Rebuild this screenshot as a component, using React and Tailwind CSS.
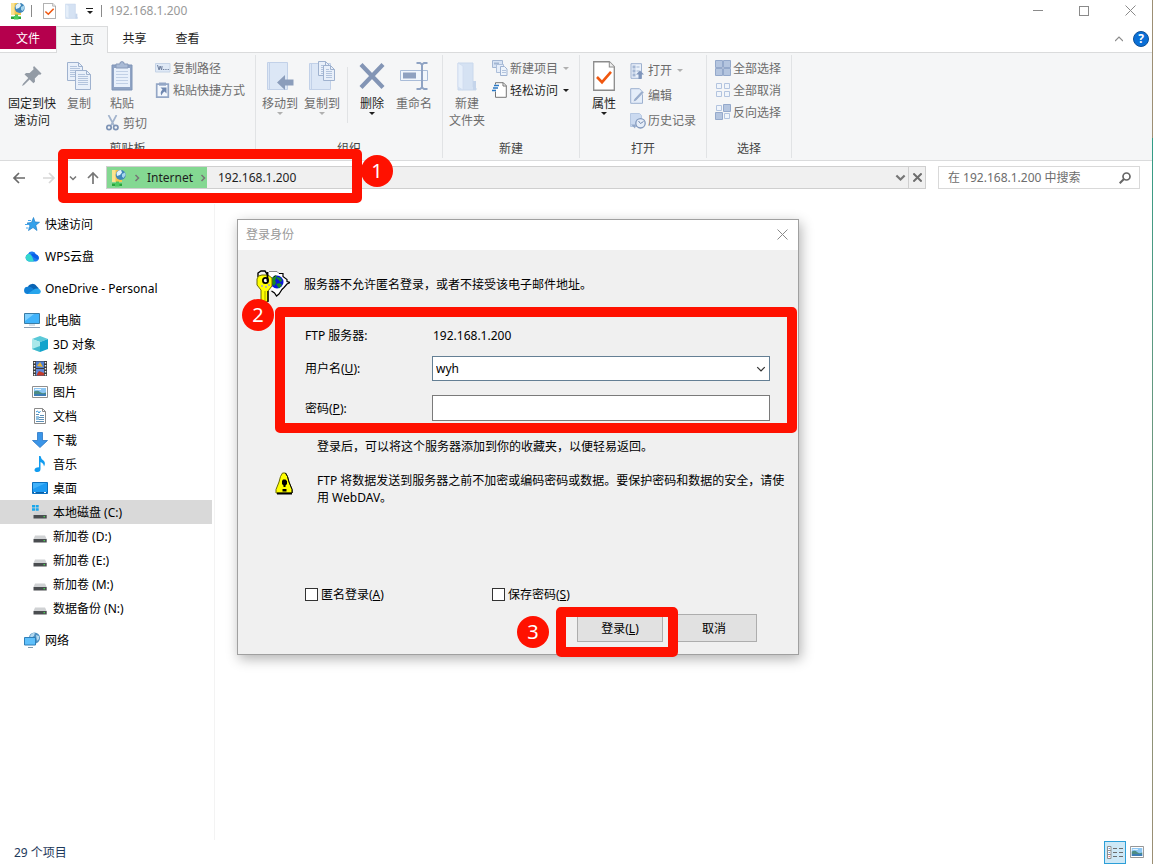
import React from "react";
import { useState } from "react";

/* ---------- small glyphs ---------- */

const Caret = ({ className = "text-[#1e1e1e]" }) => (
  <svg width="6" height="3" viewBox="0 0 6 3" className={className}>
    <path d="M0 0h6L3 3z" fill="currentColor" />
  </svg>
);

const Chevron = ({ dir = "down", size = 8, stroke = 1.5, className = "text-[#767676]" }) => {
  const d = {
    down: "M1 2.5l3 3 3-3",
    up: "M0 6l4-4 4 4",
    right: "M2.5 1l3 3-3 3",
  }[dir];
  return (
    <svg width={size} height={size} viewBox="0 0 8 8" className={className}>
      <path d={d} fill="none" stroke="currentColor" strokeWidth={stroke} />
    </svg>
  );
};

const Cross = ({ size = 11, stroke = 1, className = "text-[#8a8a8a]" }) => (
  <svg width={size} height={size} viewBox="0 0 11 11" className={className}>
    <path d="M.5.5l10 10M10.5.5l-10 10" stroke="currentColor" strokeWidth={stroke} />
  </svg>
);

const Arrow = ({ dir = "left", className = "text-[#6a6a6a]" }) => {
  const d = {
    left: "M13 7H2M7 2L2 7l5 5",
    right: "M1 7h11M7 2l5 5-5 5",
    up: "M7 13V2M2 7l5-5 5 5",
  }[dir];
  return (
    <svg width="14" height="14" viewBox="0 0 14 14" className={className}>
      <path d={d} fill="none" stroke="currentColor" strokeWidth="1.7" />
    </svg>
  );
};

/* ---------- icons ---------- */

const FtpIcon = () => (
  <svg width="16" height="18" viewBox="0 0 16 18" className="shrink-0">
    <path d="M1 1h10v12H1z" fill="#f3c74f" />
    <path d="M1 1h3.500v12H1z" fill="#fbe391" />
    <path d="M5 12.500h3v2.500H5z" fill="#4fc060" />
    <path d="M1 14.500h10v2.500H1z" fill="#27a63a" />
    <path d="M4 14h4.500v3.500H4z" fill="#4ccb5e" />
    <circle cx="9.700" cy="6" r="5" fill="#3f86ba" />
    <path d="M5.500 4Q7 1 10 1l1 2.500L9 6 6 7z" fill="#e2f2fa" />
    <path d="M11 5l3-1.500.6 2.600-2 3-1.600-1.300z" fill="#a6d4ec" />
  </svg>
);

const CheckDoc = ({ big }) => (
  <svg width={big ? 22 : 13} height={big ? 30 : 16} viewBox="0 0 22 29" preserveAspectRatio="none">
    <path d="M.7.7h15.600l5 5v22.600H.7z" fill="#fff" stroke="#8b8b8b" strokeWidth="1.300" />
    <path d="M16.300.7v5h5" fill="#eee" stroke="#8b8b8b" strokeWidth="1" />
    <path d="M4 15.500l5 5 9-10" fill="none" stroke="#f0570f" strokeWidth="2.600" />
  </svg>
);

const PaleFolder = ({ big }) => (
  <svg width={big ? 20 : 13} height={big ? 30 : 16} viewBox="0 0 20 30" preserveAspectRatio="none">
    <path d="M1 2h15v24l3 1v2H1z" fill="#d5e2f3" stroke="#c9d8ec" />
    <path d="M1 2l5 3v24l-5-3z" fill="#e6effa" stroke="#cfdcef" strokeWidth=".8" />
    <path d="M16 20h3v9h-3z" fill="#c5d5eb" />
  </svg>
);

const PinIcon = () => (
  <svg width="22" height="22" viewBox="0 0 22 22">
    <path d="M13 1l7.500 7.500-1.200 1.300-1.500-.3-4 4 .2 3.300-1.600 1.500L8.600 14.500 3 20l-2 1 1-2.200L7.300 13 3.500 9.400 5 7.900l3.600.2 4-3.900-.5-1.800z" fill="#939ba5" />
  </svg>
);

const Page = ({ x, y, w = 15, h = 19 }) => (
  <g transform={`translate(${x} ${y})`}>
    <path d={`M.5.5h${w - 5}l4 4v${h - 5}H.5z`} fill="#e9f0fa" stroke="#9fb2cf" />
    <path d={`M${w - 4.5}.5v4h4`} fill="none" stroke="#9fb2cf" />
    <path
      d={`M3 4.500h${w - 9}M3 6.500h${w - 6}M3 8.500h${w - 6}M3 10.500h${w - 6}M3 12.500h${w - 6}${h > 16 ? `M3 14.500h${w - 6}` : ""}`}
      stroke="#b3c4dd"
    />
  </g>
);

const CopyIcon = () => (
  <svg width="26" height="30" viewBox="0 0 26 30">
    <Page x={1} y={1} w={16} />
    <Page x={9} y={9} w={16} h={20} />
  </svg>
);

const PasteIcon = () => (
  <svg width="22" height="30" viewBox="0 0 22 30">
    <path d="M1 4h20v25H1z" fill="#8fa3c4" stroke="#7f94b7" />
    <path d="M3 7h16v19H3z" fill="#e8f0fb" />
    <path d="M5 3h4V1.500Q11-.3 13 1.500V3h4v4H5z" fill="#a9bad5" stroke="#8799b8" />
    <path d="M5 10.500h12M5 13.500h12M5 16.500h12M5 19.500h12M5 22.500h12" stroke="#c1d0e6" />
  </svg>
);

const CopyPathIcon = () => (
  <svg width="16" height="16" viewBox="0 0 16 16">
    <path d="M.5 3.500h14.500v8.500H.5z" fill="#dfe9f6" stroke="#c5d3e6" />
    <path d="M2.500 5l1.600 5 1-4 1.500 4 .5-4" fill="none" stroke="#6e7f9e" />
    <path d="M8 9.500h1.300M10.300 9.500h1.300M12.600 9.500h1.300" stroke="#6e7f9e" />
  </svg>
);

const ShortcutIcon = () => (
  <svg width="16" height="16" viewBox="0 0 16 16">
    <path d="M1.700 2.200h11.600v12.900H1.700z" fill="#f4f8fd" stroke="#94a7c6" strokeWidth="1.700" />
    <path d="M4 .5h7v3.200H4z" fill="#94a7c6" />
    <path d="M5.500 5.500h6v6l-2-2Q7.500 10.500 6.500 13.500 4.500 10.500 7.500 7.500z" fill="#7088b0" />
  </svg>
);

const ScissorsIcon = () => (
  <svg width="13" height="16" viewBox="0 0 13 16" fill="none">
    <path d="M2.500 0l5.500 10.500M10.500 0L5 10.500" stroke="#a3b4cd" strokeWidth="1.700" />
    <circle cx="3" cy="12.500" r="2.200" stroke="#7d93b5" strokeWidth="1.700" />
    <circle cx="9.800" cy="12.500" r="2.200" stroke="#7d93b5" strokeWidth="1.700" />
  </svg>
);

const MoveToIcon = () => (
  <svg width="28" height="30" viewBox="0 0 28 30">
    <path d="M1.500 1.500h20v27h-20z" fill="#dce7f6" stroke="#c2d1e8" />
    <path d="M3.500 1.500v27" stroke="#c2d1e8" />
    <path d="M11 21.500l8-7.500v4.500h8.500v6H19V29z" fill="#8b9dbb" />
  </svg>
);

const CopyToIcon = () => (
  <svg width="28" height="30" viewBox="0 0 28 30">
    <path d="M1.500 2.500h21v26h-21z" fill="#dce7f6" stroke="#c2d1e8" />
    <path d="M3.500 2.500v26" stroke="#c2d1e8" />
    <Page x={10} y={0} w={12} h={15} />
    <Page x={15} y={4} w={12} h={16} />
  </svg>
);

const DeleteIcon = () => (
  <svg width="26" height="30" viewBox="0 0 26 30">
    <path d="M2 3.500l22 23M24 3.500L2 26.500" stroke="#8395b5" strokeWidth="4.200" />
  </svg>
);

const RenameIcon = () => (
  <svg width="30" height="30" viewBox="0 0 30 30">
    <path d="M1.500 9.500h27v10h-27z" fill="#f1f6fc" stroke="#a9bcd8" />
    <path d="M4 11.500h13v6H4z" fill="#8fa1c0" />
    <path d="M17.500 2h3.500l2 1.500L25 2h3.500M17.500 28H21l2-1.500L25 28h3.500M23 3v24" fill="none" stroke="#8fa3c3" strokeWidth="2" />
  </svg>
);

const NewItemIcon = () => (
  <svg width="16" height="16" viewBox="0 0 16 16">
    <path d="M.5.5h10v7H.5z" fill="#d7e3f4" stroke="#a3b6d3" />
    <path d="M2 3.500h5" stroke="#a3b6d3" strokeWidth="2" />
    <path d="M4.500 4.500h7v8h-7z" fill="#e6eefa" stroke="#adbfda" />
    <path d="M8.500 6.500h4l2.500 2.500v6.500H8.500z" fill="#edf3fb" stroke="#9fb3d2" />
    <path d="M10 10.500h4M10 12.500h4" stroke="#b3c4dd" />
  </svg>
);

const EasyAccessIcon = () => (
  <svg width="16" height="16" viewBox="0 0 16 16">
    <path d="M3.500 2.500V.7h7.800l3 3v11.600H3.500V9.500" fill="#fff" stroke="#757575" />
    <path d="M11 .7v3.300h3.300" fill="none" stroke="#757575" />
    <path d="M2 3.500h5M1 6h5M0 8.500h4" stroke="#2b78c4" strokeWidth="1.300" />
  </svg>
);

const OpenIcon = () => (
  <svg width="14" height="16" viewBox="0 0 14 16">
    <path d="M1 .7h10.500v14.600H1z" fill="#eaf1fa" stroke="#9db1cf" />
    <path d="M2.500 2.500h3v3h-3zM2.500 6.500h3v3h-3zM2.500 10.500h3v3h-3z" fill="#a3b6d3" />
    <path d="M6.500 4h3M6.500 8h3" stroke="#a3b6d3" />
    <path d="M10 7.500l4 4h-2.500V16h-3v-4.500H6z" fill="#7f95bb" />
  </svg>
);

const EditIcon = () => (
  <svg width="14" height="16" viewBox="0 0 14 16">
    <path d="M.7.7h8.800l3 3v11.600H.7z" fill="#e4edf9" stroke="#9db1cf" />
    <path d="M3 14l1-3 8-8.500 2 2L6 13z" fill="#9aaecd" stroke="#fff" strokeWidth=".5" />
  </svg>
);

const HistoryIcon = () => (
  <svg width="16" height="16" viewBox="0 0 16 16">
    <path d="M.5.5h9l2 2v11H.5z" fill="#cbdaf0" stroke="#b6c8e2" />
    <circle cx="10.500" cy="10.300" r="4.700" fill="#e7eef8" stroke="#8299bd" strokeWidth="1.300" />
    <path d="M8.500 8l2 2.500L13.500 8.500" fill="none" stroke="#7288ad" />
    <path d="M1 11.500h5l-1 4z" fill="#93a8c9" />
  </svg>
);

// four tiles, each one filled or empty
const TilesIcon = ({ filled }) => (
  <svg width="16" height="16" viewBox="0 0 16 16">
    {[[0, 0], [8, 0], [0, 8], [8, 8]].map(([x, y], i) =>
      filled[i] ? (
        <path key={i} d={`M${x + 0.5} ${y + 0.5}h7v7h-7z`} fill="#b4c5df" stroke="#94a9cb" />
      ) : (
        <path key={i} d={`M${x + 1.5} ${y + 1.5}h5v5h-5z`} fill="#f0f5fb" stroke="#b3c4df" />
      )
    )}
  </svg>
);

const StarIcon = () => (
  <svg width="16" height="16" viewBox="0 0 16 16">
    <path d="M9.500 1.500L11 6l4.500.3-3.700 2.900 1.200 5.300L9 11.500l-4.500 3L6 9.700 3 7l4.500-.5z" fill="#35a1ea" stroke="#1f7fc9" strokeWidth=".7" />
    <path d="M4 4.500h3M1 8.500h4M2 12h2.500" stroke="#4aa6ea" />
  </svg>
);

const WpsCloudIcon = () => (
  <svg width="16" height="16" viewBox="0 0 16 16">
    <path d="M5 13.500a4 4 0 0 1-1-7.600A4.300 4.300 0 0 1 12 6.500a3.600 3.600 0 0 1 0 7z" fill="#1d7df2" />
    <path d="M5 13.500a4 4 0 0 1-1-7.600Q6.500 5.500 8 8.500l2 5z" fill="#35d7cd" />
    <path d="M7 6.500q3-2 5 0a3.600 3.600 0 0 1 2.500 5Q10 10.500 7 6.500z" fill="#0b5fe8" />
  </svg>
);

const OneDriveIcon = () => (
  <svg width="17" height="16" viewBox="0 0 17 16">
    <path d="M4 6.500a5 5 0 0 1 8.500-.5L15 8.500l-8 3z" fill="#0a64b4" />
    <path d="M3.500 14A3.500 3.500 0 0 1 4 6.700q3-.4 5 1.800l4 5.500z" fill="#1180d6" />
    <path d="M3.500 14L11 8.800q5-1.300 5.700 2.500a2.600 2.600 0 0 1-2.500 2.700z" fill="#27a5ec" />
  </svg>
);

const PcIcon = () => (
  <svg width="16" height="16" viewBox="0 0 16 16">
    <path d="M.5 1.500h15v10H.5z" fill="#40b3fb" stroke="#3a7ca5" />
    <path d="M1 2h9L1 9z" fill="#7fd0ff" />
    <path d="M5 13h6" stroke="#a9c0d4" />
    <path d="M0 15.500h16" stroke="#8d9fb3" />
  </svg>
);

const CubeIcon = () => (
  <svg width="16" height="16" viewBox="0 0 16 16">
    <path d="M8 0l8 3-8 3-8-3z" fill="#5ac9d8" />
    <path d="M0 3l8 3v10l-8-3z" fill="#a9e8ea" />
    <path d="M8 6l8-3v10l-8 3z" fill="#12a4cc" />
    <path d="M0 13l8-3v6z" fill="#3fb9cd" />
  </svg>
);

const VideoIcon = () => (
  <svg width="16" height="16" viewBox="0 0 16 16">
    <path d="M1 1h14v15H1z" fill="#3b3b3b" />
    <path d="M4 1.500h8v6.500H4z" fill="#4e7fd4" />
    <path d="M4 9h8v6.500H4z" fill="#6189d8" />
    <path d="M5 6l3-4 3 5z" fill="#e3b234" />
    <path d="M5 14l2-3 5 2v2.500H5z" fill="#c23b2b" />
    <path d="M2.500 2v14M13.500 2v14" stroke="#f3f3f3" strokeWidth="1.400" strokeDasharray="1.500 1.500" />
  </svg>
);

const PictureIcon = ({ w = 16 }) => (
  <svg width={w} height="12" viewBox="0 0 16 12" preserveAspectRatio="none">
    <path d="M.5.5h15v11H.5z" fill="#fff" stroke="#8f8f8f" />
    <path d="M2 2h12v8H2z" fill="#8cc6f3" />
    <path d="M2 5.500q4-1.500 6 .5t6 .5V8H2z" fill="#4c8c84" />
    <path d="M2 8h12v2H2z" fill="#3d7db5" />
    <path d="M3 3.500h6" stroke="#e6f4fd" />
  </svg>
);

const DocIcon = () => (
  <svg width="16" height="16" viewBox="0 0 16 16">
    <path d="M2.500.5h8l3 3v12h-11z" fill="#fff" stroke="#8a8a8a" />
    <path d="M10.500.5v3h3" fill="none" stroke="#8a8a8a" />
    <path d="M4 4l1.500-1 1.500 2L8.500 3" fill="none" stroke="#3b9add" />
    <path d="M4 6.500h3M8 7.500h4M4 9.500h8M4 11.500h8M4 13.500h8" stroke="#5d8fb5" />
    <path d="M4 8h3v4H4z" fill="#8fbfe0" />
  </svg>
);

const DownloadIcon = () => (
  <svg width="16" height="16" viewBox="0 0 16 16">
    <path d="M5.500.5h5v8h5L8 15.500.5 8.500h5z" fill="#3a95e8" stroke="#2a76c4" strokeWidth=".8" />
  </svg>
);

const MusicIcon = () => (
  <svg width="16" height="16" viewBox="0 0 16 16">
    <path d="M7 0h1.500q.5 3 3 4.500 2.500 2 .5 6-.3-3.500-3.500-4.500v7q0 3-3 3Q2.500 16 2.500 14q0-2.500 4.500-2.800z" fill="#119cf0" />
  </svg>
);

const DesktopIcon = () => (
  <svg width="16" height="12" viewBox="0 0 16 12">
    <path d="M.5.5h15v11H.5z" fill="#1e9bf2" stroke="#0b6fbd" />
    <path d="M1 1h13L1 7z" fill="#41b2fa" />
    <path d="M1 10.500h14" stroke="#0b5fa5" />
    <path d="M2 10.500h1.500M12 10.500h2" stroke="#fff" />
  </svg>
);

const DriveIcon = ({ system }) => (
  <svg width="16" height="16" viewBox="0 0 16 16">
    {system ? <path d="M0 1h3v2.500H0zM3.700 1h3v2.500h-3zM0 4.300h3v2.500H0zM3.700 4.300h3v2.500h-3z" fill="#1aa7ec" /> : null}
    <path d="M3 7.500h10l1.700 3.500H1.500z" fill="#d0d2d4" />
    <path d="M1.500 11h13.200v3.500H1.500z" fill="#4a4d50" />
    <path d="M11.500 12h1.500v1.300h-1.500z" fill="#47d04f" />
  </svg>
);

const NetworkIcon = () => (
  <svg width="17" height="16" viewBox="0 0 17 16">
    <circle cx="10.500" cy="6" r="5.500" fill="#4d8fc0" />
    <path d="M6 4q2-3.500 5-3.500L10 4 7 6zM12 3l3 1v3l-2 2z" fill="#b5d9ee" />
    <path d="M.5 5.500h11v7.500H.5z" fill="#5fc0fb" stroke="#2f7fb8" />
    <path d="M4 15.500h5" stroke="#7d99ad" />
  </svg>
);

const KeyIcon = () => (
  <svg width="34" height="33" viewBox="0 0 34 33">
    <path d="M13 1.500h8l2 2h4l6.500 8.500L22.500 26 14 18z" fill="#fff" />
    <path d="M13 1.500h8l2 2" fill="none" stroke="#888" />
    <path d="M23 3.500h4v3l4 3v2l3 1-3 1.500-3 3.500-2 2-3 4.500-2.500 2-2-3-3-2" fill="none" stroke="#000" strokeWidth="1.200" />
    <circle cx="21" cy="12" r="6.500" fill="#0a17d8" />
    <path d="M15 12q0-6 6-6.500L20 9l-1 1 1 3-2 3zM21 7l4 1 1 3-2 1-1-2-2-1zM20 14l4-1 2 2-3 3.500z" fill="#16892a" />
    <path d="M17.500 7l2-1.500" stroke="#000" />
    <path d="M2 7V3l3-2h4l2 3v4" fill="none" stroke="#000" strokeWidth="1.400" />
    <path d="M2.500 6L1 9v6l4 5v11l3 2 4-2V21l4-5V8l-4-3H6z" fill="#ff0" stroke="#6b6b00" />
    <path d="M12 21v11" stroke="#000" strokeWidth="1.400" />
    <path d="M9 21v11" stroke="#a8a800" />
    <circle cx="9.500" cy="10.500" r="2.600" fill="#fff" stroke="#000" strokeWidth="1.800" />
    <path d="M11.500 2v9" stroke="#000" strokeWidth="1.800" />
    <path d="M5 15h2v2H5zM9 16h2v2H9zM12 14h2v2h-2z" fill="#b5b5a0" />
  </svg>
);

const WarningIcon = () => (
  <svg width="18" height="23" viewBox="0 0 18 23">
    <path d="M7.500 1h3l2 3.500L14 10l3 7.500V21H1v-3.500L4 10l1.500-5.500z" fill="#ff0" stroke="#6b6b00" />
    <path d="M10.500 1l2 3.500L14 10l3.200 7.500V21" fill="none" stroke="#000" />
    <path d="M2 21.500h15" stroke="#000" strokeWidth="2" />
    <path d="M7 9l1-1.500h2.500L12 9v3l-1.500 1.500v1.500H8.500v-1.500L7 12z" fill="#000" />
    <path d="M7.500 17h4v2.500h-4z" fill="#000" />
  </svg>
);

/* ---------- ribbon ---------- */

const Group = ({ label, className = "", children }) => (
  <section className="flex min-h-[103px] flex-col justify-between border-r border-[#e1e3e5] pb-px">
    <div className={`flex items-start ${className}`}>{children}</div>
    <div className="text-center text-[#444]">{label}</div>
  </section>
);

const BigButton = ({ icon, lines, enabled, caret, className = "w-[42px]" }) => (
  <button type="button" className={`flex flex-col items-center pt-[5px] ${enabled ? "text-[#1e1e1e]" : "text-[#6d6d6d]"} ${className}`}>
    <span className="mb-[3px] flex h-8 items-center justify-center">{icon}</span>
    {lines.map((line) => (
      <span key={line} className="whitespace-nowrap">{line}</span>
    ))}
    {caret ? <Caret className={enabled ? "text-[#1e1e1e]" : "text-[#b0b0b0]"} /> : null}
  </button>
);

const SmallButton = ({ icon, label, enabled, caret, tall }) => (
  <button type="button" className={`flex items-center ${tall ? "h-[25px]" : "h-[22px]"} ${enabled ? "text-[#1e1e1e]" : "text-[#6d6d6d]"}`}>
    <span className="flex w-[18px] shrink-0">{icon}</span>
    <span className="whitespace-nowrap">{label}</span>
    {caret ? (
      <span className="ml-[5px]">
        <Caret className={enabled ? "text-[#1e1e1e]" : "text-[#b0b0b0]"} />
      </span>
    ) : null}
  </button>
);

const Ribbon = () => (
  <div className="flex border-y border-[#dadbdc] bg-[#f5f6f7] py-0.5">
    <Group label="剪贴板" className="pl-2 pr-2.5">
      <BigButton icon={<PinIcon />} lines={["固定到快", "速访问"]} enabled className="w-12" />
      <BigButton icon={<CopyIcon />} lines={["复制"]} className="w-[46px]" />
      <div className="mr-2">
        <BigButton icon={<PasteIcon />} lines={["粘贴"]} className="w-10" />
        <button type="button" className="flex h-[22px] items-center gap-1 pl-1 text-[#6d6d6d]">
          <ScissorsIcon />
          剪切
        </button>
      </div>
      <div className="pt-0.5">
        <SmallButton icon={<CopyPathIcon />} label="复制路径" />
        <SmallButton icon={<ShortcutIcon />} label="粘贴快捷方式" />
      </div>
    </Group>
    <Group label="组织" className="pl-[3px] pr-[7px]">
      <BigButton icon={<MoveToIcon />} lines={["移动到"]} caret />
      <BigButton icon={<CopyToIcon />} lines={["复制到"]} caret />
      <div className="ml-1 mr-[3px] mt-3 h-14 border-l border-[#e1e3e5]" />
      <BigButton icon={<DeleteIcon />} lines={["删除"]} enabled caret />
      <BigButton icon={<RenameIcon />} lines={["重命名"]} />
    </Group>
    <Group label="新建" className="pl-[3px] pr-2.5">
      <BigButton icon={<PaleFolder big />} lines={["新建", "文件夹"]} />
      <div className="pl-1 pt-0.5">
        <SmallButton icon={<NewItemIcon />} label="新建项目" caret />
        <SmallButton icon={<EasyAccessIcon />} label="轻松访问" enabled caret />
      </div>
    </Group>
    <Group label="打开" className="pl-[3px] pr-2.5">
      <BigButton icon={<CheckDoc big />} lines={["属性"]} enabled caret />
      <div className="pl-[5px] pt-[3px]">
        <SmallButton icon={<OpenIcon />} label="打开" caret tall />
        <SmallButton icon={<EditIcon />} label="编辑" tall />
        <SmallButton icon={<HistoryIcon />} label="历史记录" tall />
      </div>
    </Group>
    <Group label="选择" className="pl-2 pr-2.5">
      <div className="pt-0.5">
        <SmallButton icon={<TilesIcon filled={[1, 1, 1, 1]} />} label="全部选择" />
        <SmallButton icon={<TilesIcon filled={[0, 0, 0, 0]} />} label="全部取消" />
        <SmallButton icon={<TilesIcon filled={[0, 1, 1, 0]} />} label="反向选择" />
      </div>
    </Group>
  </div>
);

/* ---------- window chrome ---------- */

const TitleBar = () => (
  <header className="flex h-[26px] items-start">
    <div className="flex h-[21px] items-center pl-[10px]">
      <FtpIcon />
      <span className="ml-[5px] h-3 border-l border-[#8a8a8a]" />
      <span className="ml-[11px]"><CheckDoc /></span>
      <span className="ml-[9px]"><PaleFolder /></span>
      <span className="ml-2 flex flex-col items-center gap-0.5">
        <span className="w-[7px] border-t border-[#1e1e1e]" />
        <Caret />
      </span>
      <span className="ml-2 h-3 border-l border-[#8a8a8a]" />
      <h1 className="ml-[7px] text-[#999]">192.168.1.200</h1>
    </div>
    <div className="ml-auto flex">
      <button type="button" aria-label="最小化" className="flex h-[21px] w-[46px] items-center justify-center">
        <span className="w-2.5 border-t border-[#8a8a8a]" />
      </button>
      <button type="button" aria-label="最大化" className="flex h-[21px] w-[46px] items-center justify-center">
        <span className="size-2.5 border border-[#8a8a8a]" />
      </button>
      <button type="button" aria-label="关闭" className="flex h-[21px] w-[46px] items-center justify-center">
        <Cross />
      </button>
    </div>
  </header>
);

const Tabs = () => (
  <nav className="flex h-[26px] items-start text-[#1e1e1e]">
    <button type="button" className="h-[23px] w-14 bg-[#b5004d] pt-px text-white">文件</button>
    <button type="button" className="relative h-[27px] w-[52px] border border-b-0 border-[#dadbdc] bg-[#f5f6f7] pb-0.5">主页</button>
    <button type="button" className="h-[25px] w-[53px]">共享</button>
    <button type="button" className="h-[25px] w-[53px]">查看</button>
    <div className="ml-auto flex h-[26px] items-center gap-2.5 pr-1">
      <Chevron dir="up" stroke={1.2} className="text-[#8a8a8a]" />
      <button type="button" aria-label="帮助" className="size-4 rounded-full border border-[#0d4f96] bg-[#0a6fd6] leading-[14px] font-bold text-white">?</button>
    </div>
  </nav>
);

const AddressBar = () => (
  <div className="flex items-center py-[5px] pl-3 pr-[13px]">
    <div className="flex items-center">
      <Arrow />
      <Arrow dir="right" className="ml-4 text-[#d8d8d8]" />
      <Chevron className="ml-[13px] text-[#767676]" />
      <Arrow dir="up" className="ml-[9px] text-[#767676]" />
    </div>
    <div className="ml-1.5 flex h-[23px] min-w-0 flex-1 items-center border border-[#cfcfcf] bg-[#f0f0f0] text-[#1e1e1e]">
      <div className="flex h-full w-[100px] items-center justify-between bg-[#84d892] pl-1">
        <span className="flex items-center gap-1.5">
          <FtpIcon />
          <Chevron dir="right" className="text-[#767676]" />
        </span>
        <span>Internet</span>
        <Chevron dir="right" className="text-[#767676]" />
      </div>
      <span className="ml-[11px]">192.168.1.200</span>
      <Chevron size={11} stroke={1.6} className="ml-auto mr-0.5 text-[#767676]" />
      <button type="button" aria-label="停止" className="flex h-full w-[17px] items-center justify-center border-l border-[#cfcfcf]">
        <Cross size={9} stroke={2.4} className="text-[#6d6d6d]" />
      </button>
    </div>
    <div className="ml-3 flex h-[23px] w-[202px] items-center border border-[#d9d9d9] pl-[9px] pr-2">
      <input aria-label="搜索" placeholder="在 192.168.1.200 中搜索" className="w-full min-w-0 outline-none placeholder:text-[#6d6d6d]" />
      <svg width="12" height="12" viewBox="0 0 12 12" fill="none" stroke="#666" className="shrink-0">
        <circle cx="7.500" cy="4.500" r="3.500" strokeWidth="1.700" />
        <path d="M5 7L.7 11.300" strokeWidth="2" />
      </svg>
    </div>
  </div>
);

/* ---------- navigation pane ---------- */

const navItems = [
  { label: "快速访问", icon: <StarIcon />, root: true },
  { label: "WPS云盘", icon: <WpsCloudIcon />, root: true },
  { label: "OneDrive - Personal", icon: <OneDriveIcon />, root: true },
  { label: "此电脑", icon: <PcIcon />, root: true },
  { label: "3D 对象", icon: <CubeIcon /> },
  { label: "视频", icon: <VideoIcon /> },
  { label: "图片", icon: <PictureIcon /> },
  { label: "文档", icon: <DocIcon /> },
  { label: "下载", icon: <DownloadIcon /> },
  { label: "音乐", icon: <MusicIcon /> },
  { label: "桌面", icon: <DesktopIcon /> },
  { label: "本地磁盘 (C:)", icon: <DriveIcon system />, selected: true },
  { label: "新加卷 (D:)", icon: <DriveIcon /> },
  { label: "新加卷 (E:)", icon: <DriveIcon /> },
  { label: "新加卷 (M:)", icon: <DriveIcon /> },
  { label: "数据备份 (N:)", icon: <DriveIcon /> },
  { label: "网络", icon: <NetworkIcon />, root: true },
];

const Sidebar = () => (
  <aside className="mt-2.5 w-[215px] shrink-0 border-r border-[#f3f3f3] pr-0.5">
    {navItems.map((item) => (
      <a
        key={item.label}
        href="#"
        className={`flex h-6 items-center text-black ${item.root ? "mt-2 pl-6" : "pl-8"} ${item.selected ? "bg-[#d9d9d9]" : ""}`}
      >
        <span className="flex w-[21px] items-center">{item.icon}</span>
        {item.label}
      </a>
    ))}
  </aside>
);

/* ---------- login dialog ---------- */

const Mark = ({ children, className }) => (
  <span className={`absolute flex size-8 items-center justify-center rounded-full bg-[#ff1100] text-xl text-white ${className}`}>{children}</span>
);

const Frame = ({ className }) => (
  <div className={`pointer-events-none absolute rounded-[5px] border-10 border-[#ff1100] ${className}`} />
);

const LoginDialog = () => {
  const [user, setUser] = useState("wyh");
  const [password, setPassword] = useState("");
  const [anonymous, setAnonymous] = useState(false);
  const [save, setSave] = useState(false);

  const checkbox = "size-[13px] appearance-none border border-[#333] bg-white checked:bg-[#333]";
  const button = "h-7 w-[86px] border border-[#adadad] bg-[#e1e1e1]";

  return (
    <div role="dialog" aria-label="登录身份" className="absolute left-[237px] top-[219px] w-[562px] border border-[#a0a0a0] bg-[#f0f0f0] text-black shadow-[2px_4px_12px_rgba(0,0,0,0.3)]">
      <div className="flex h-[30px] items-center justify-between bg-white pb-0.5 pl-2 pr-2.5">
        <h2 className="text-[#999]">登录身份</h2>
        <button type="button" aria-label="关闭"><Cross /></button>
      </div>
      <form className="pb-3 pt-5" onSubmit={(e) => e.preventDefault()}>
        <div className="flex items-start gap-3.5 pl-[18px]">
          <KeyIcon />
          <p className="pt-1.5">服务器不允许匿名登录，或者不接受该电子邮件地址。</p>
        </div>
        <div className="mt-5 flex h-6 items-center pl-[67px]">
          <span className="w-32">FTP 服务器:</span>
          <span>192.168.1.200</span>
        </div>
        <div className="mt-[9px] flex items-center pl-[67px]">
          <label htmlFor="user" className="w-[127px]">用户名(<u>U</u>):</label>
          <div className="relative h-[25px] w-[338px]">
            <select id="user" value={user} onChange={(e) => setUser(e.target.value)} className="size-full appearance-none border border-[#647f94] bg-white pl-[3px] outline-none">
              <option value="wyh">wyh</option>
            </select>
            <span className="pointer-events-none absolute right-1 top-2">
              <Chevron size={10} stroke={1} className="text-[#333]" />
            </span>
          </div>
        </div>
        <div className="mt-3.5 flex items-center pl-[67px]">
          <label htmlFor="password" className="w-[127px]">密码(<u>P</u>):</label>
          <input id="password" type="password" value={password} onChange={(e) => setPassword(e.target.value)} className="h-[26px] w-[338px] border border-[#7a7a7a] bg-white px-[3px] outline-none" />
        </div>
        <p className="mt-[17px] pl-[79px]">登录后，可以将这个服务器添加到你的收藏夹，以便轻易返回。</p>
        <div className="mt-[17px] flex items-start pl-[37px] pr-[9px]">
          <WarningIcon />
          <p className="flex-1 pl-6">FTP 将数据发送到服务器之前不加密或编码密码或数据。要保护密码和数据的安全，请使用 WebDAV。</p>
        </div>
        <div className="mt-20 flex pl-[67px]">
          <label className="flex w-[187px] items-center gap-[3px]">
            <input type="checkbox" checked={anonymous} onChange={(e) => setAnonymous(e.target.checked)} className={checkbox} />
            <span>匿名登录(<u>A</u>)</span>
          </label>
          <label className="flex items-center gap-[3px]">
            <input type="checkbox" checked={save} onChange={(e) => setSave(e.target.checked)} className={checkbox} />
            <span>保存密码(<u>S</u>)</span>
          </label>
        </div>
        <div className="mt-[11px] flex justify-end gap-2 pr-[41px]">
          <button type="submit" className={button}>登录(<u>L</u>)</button>
          <button type="button" className={button}>取消</button>
        </div>
      </form>

      <Frame className="left-[37px] top-[87px] h-[126px] w-[522px]" />
      <Mark className="left-1 top-[79px]">2</Mark>
      <Frame className="left-[318px] top-[387px] h-[50px] w-[122px]" />
      <Mark className="left-[279px] top-[396px]">3</Mark>
    </div>
  );
};

const StatusBar = () => (
  <footer className="flex h-6 items-center justify-between pl-3.5 pr-[9px] text-[#1e395b]">
    <span>29 个项目</span>
    <div className="flex items-center gap-1">
      <button type="button" aria-label="详细信息" className="flex h-[23px] w-[22px] items-center justify-center border border-[#2c9fd8] bg-[#cde8f6]">
        <svg width="16" height="13" viewBox="0 0 16 13">
          <path d="M.5.500h3.500v12H.5z" fill="#fff" stroke="#8f8f8f" />
          <path d="M.5 4.500H4M.5 8.500H4" stroke="#8f8f8f" />
          <path d="M6 2.500h4M12 2.500h4M6 6.500h4M12 6.500h4M6 10.500h4M12 10.500h4" stroke="#6d6d6d" />
          <path d="M1.700 10h1v1h-1z" fill="#d33" />
          <path d="M1.700 2h1v1h-1zM1.700 6h1v1h-1z" fill="#37c" />
        </svg>
      </button>
      <button type="button" aria-label="大缩略图"><PictureIcon w={14} /></button>
    </div>
  </footer>
);

const App = () => {
  return (
    <div lang="zh-CN" className="relative flex min-h-screen flex-col bg-white font-['Noto_Sans','Noto_Sans_CJK_SC',sans-serif] text-xs leading-[17px]">
      <TitleBar />
      <Tabs />
      <Ribbon />
      <AddressBar />
      <main className="flex flex-1">
        <Sidebar />
      </main>
      <StatusBar />

      {/* desktop showing past the window's right edge */}
      <div className="absolute inset-y-0 right-0 w-px bg-linear-to-b from-[#9c8f74] from-16% via-[#2f9c86] via-16% to-[#9c8f74]" />

      <LoginDialog />
      <Frame className="left-[58px] top-[149px] h-[54px] w-[304px]" />
      <Mark className="left-[361px] top-[155px]">1</Mark>
    </div>
  );
};

export default App;
